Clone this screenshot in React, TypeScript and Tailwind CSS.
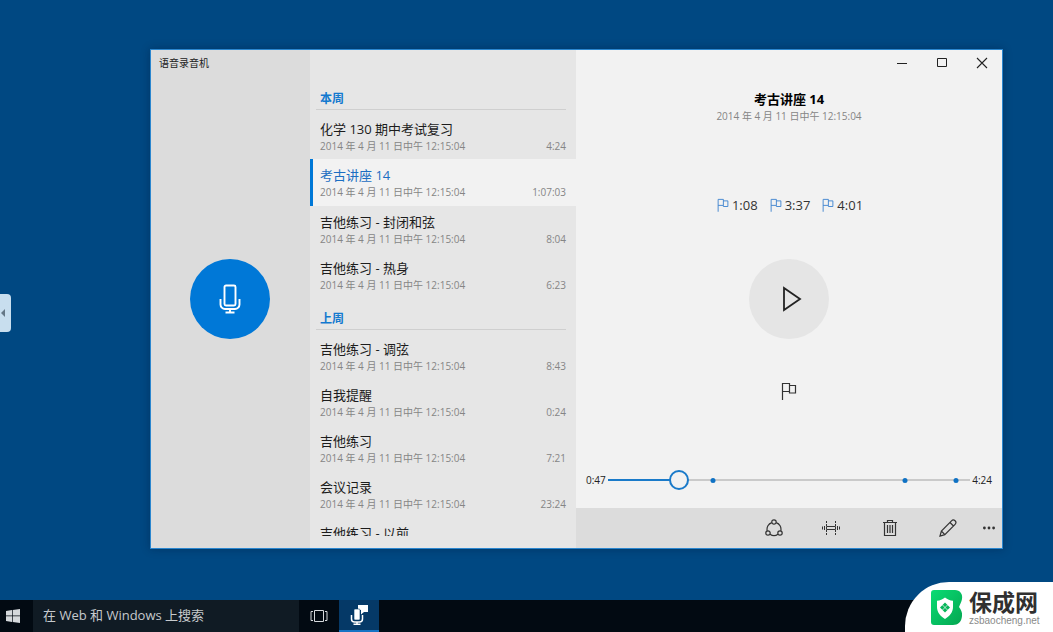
import { useState } from 'react';
import type { ReactNode } from 'react';
import clsx from 'clsx';

interface Recording {
  title: string;
  length?: string;
}

interface RecordingGroup {
  label: string;
  items: Recording[];
}

const RECORDED_AT = '2014 年 4 月 11 日中午 12:15:04';

const GROUPS: RecordingGroup[] = [
  {
    label: '本周',
    items: [
      { title: '化学 130 期中考试复习', length: '4:24' },
      { title: '考古讲座 14', length: '1:07:03' },
      { title: '吉他练习 - 封闭和弦', length: '8:04' },
      { title: '吉他练习 - 热身', length: '6:23' },
    ],
  },
  {
    label: '上周',
    items: [
      { title: '吉他练习 - 调弦', length: '8:43' },
      { title: '自我提醒', length: '0:24' },
      { title: '吉他练习', length: '7:21' },
      { title: '会议记录', length: '23:24' },
      { title: '吉他练习 - 以前' },
    ],
  },
];

const MARKERS = [
  { time: '1:08', position: 29 },
  { time: '3:37', position: 82 },
  { time: '4:01', position: 96 },
];

function FlagIcon({ className }: { className?: string }) {
  return (
    <svg className={className} viewBox="0 0 16 18" fill="none" stroke="currentColor" strokeWidth="1.2" aria-hidden="true">
      <path d="M1.5 18V1.5h7v8h-7M8.5 3.5h6v7.5h-6V9.5" />
    </svg>
  );
}

function MicIcon() {
  return (
    <svg className="h-[30px] w-[22px]" viewBox="0 0 22 30" fill="none" stroke="currentColor" strokeWidth="1.9" aria-hidden="true">
      <rect x="5.5" y="1.5" width="11" height="20" rx="1.5" />
      <path d="M1.5 15v5.5a4.5 4.5 0 0 0 4.5 4.5h10a4.5 4.5 0 0 0 4.5-4.5V15M11 25v3.5M6.5 28.5h9" />
    </svg>
  );
}

function IconButton({ label, className, children }: { label: string; className?: string; children: ReactNode }) {
  return (
    <button type="button" aria-label={label} className={clsx('grid place-items-center', className)}>
      {children}
    </button>
  );
}

function RecordingList({ selected, onSelect }: { selected: string; onSelect: (title: string) => void }) {
  return (
    <div className="flex w-[266px] shrink-0 flex-col bg-[#e6e6e6] pt-9 pb-3">
      <div className="min-h-0 flex-1 overflow-hidden">
        {GROUPS.map(group => (
          <section key={group.label} className="mb-2">
            <h2 className="mr-2.5 ml-1.5 h-6 border-b border-[#cfcfcf] pl-1 text-[12px] leading-[26px] font-bold text-[#1279cf]">{group.label}</h2>
            <ul className="pt-[3px]">
              {group.items.map(item => {
                const active = item.title === selected;
                return (
                  <li key={item.title}>
                    <button
                      type="button"
                      onClick={() => onSelect(item.title)}
                      className={clsx(
                        'flex w-full flex-col border-l-[3px] pt-[7px] pr-2.5 pl-[7px] text-left',
                        active ? 'h-[47px] border-[#0078d7] bg-[#f2f2f2]' : 'h-[46px] border-transparent',
                      )}
                    >
                      <span className={clsx('text-[13px] leading-[18px]', active ? 'text-[#1b6ec2]' : 'text-[#1c1c1c]')}>{item.title}</span>
                      {item.length && (
                        <span className="flex w-full justify-between text-[10px] leading-4 text-[#858585]">
                          <span>{RECORDED_AT}</span>
                          <span>{item.length}</span>
                        </span>
                      )}
                    </button>
                  </li>
                );
              })}
            </ul>
          </section>
        ))}
      </div>
    </div>
  );
}

function SeekBar() {
  const [position, setPosition] = useState(47);
  const played = (position / 264) * 100;

  return (
    <div className="mt-auto mb-[18px] flex items-center gap-0.5 px-2.5 text-[10px] leading-5 text-[#222]">
      <span>0:47</span>
      <div className="relative flex h-5 flex-1 items-center">
        <input
          type="range"
          aria-label="播放位置"
          min={0}
          max={264}
          value={position}
          onChange={e => setPosition(Number(e.target.value))}
          style={{ backgroundImage: `linear-gradient(to right, #1a7ac9 ${played}%, #cacaca ${played}%)` }}
          className="h-0.5 w-full appearance-none [&::-webkit-slider-thumb]:size-5 [&::-webkit-slider-thumb]:appearance-none [&::-webkit-slider-thumb]:rounded-full [&::-webkit-slider-thumb]:border-2 [&::-webkit-slider-thumb]:border-[#1a7ac9] [&::-webkit-slider-thumb]:bg-[#f2f2f2]"
        />
        {MARKERS.map(marker => (
          <span
            key={marker.time}
            className="pointer-events-none absolute size-[5px] -translate-x-1/2 rounded-full bg-[#0f72c4]"
            style={{ left: `${marker.position}%` }}
          />
        ))}
      </div>
      <span>4:24</span>
    </div>
  );
}

function Toolbar() {
  return (
    <div className="flex h-10 shrink-0 items-center justify-end bg-[#dcdcdc] text-[#333]">
      <IconButton label="共享" className="h-10 w-[57px]">
        <svg className="size-[18px]" viewBox="0 0 18 18" fill="none" stroke="currentColor" strokeWidth="1.2" aria-hidden="true">
          <circle cx="9" cy="3" r="2.2" />
          <circle cx="3" cy="14" r="2.2" />
          <circle cx="15" cy="14" r="2.2" />
          <path d="M6.8 3.6A7 7 0 0 0 2.2 11.8M11.2 3.6a7 7 0 0 1 4.6 8.2M5 15.3a7 7 0 0 0 8 0" />
        </svg>
      </IconButton>
      <IconButton label="裁剪" className="h-10 w-[57px]">
        <svg className="h-[14px] w-[18px]" viewBox="0 0 18 14" fill="none" stroke="currentColor" aria-hidden="true">
          <path d="M4.5 5.5h9v3h-9z" />
          <path d="M.5 5.5v3M2.5 5v4M15.500 5v4M17.500 5.500v3" />
          <path d="M4.500 0v14M13.500 0v14" strokeDasharray="2 1" />
        </svg>
      </IconButton>
      <IconButton label="删除" className="h-10 w-[61px]">
        <svg className="h-[18px] w-[14px]" viewBox="0 0 14 18" fill="none" stroke="currentColor" strokeWidth="1.2" aria-hidden="true">
          <path d="M0 3.500h14M4.500 3.500v-2h5v2M1.500 3.500v13h11v-13M4.500 6v8M7 6v8M9.500 6v8" />
        </svg>
      </IconButton>
      <IconButton label="重命名" className="h-10 w-[55px]">
        <svg className="size-[18px]" viewBox="0 0 18 18" fill="none" stroke="currentColor" strokeWidth="1.2" aria-hidden="true">
          <path d="M1 17l1.400-5L12.500 1.800a2.300 2.300 0 0 1 3.600 3.500L5.800 15.600zM2.400 12l3.400 3.600M11 3.500L14.500 7" />
        </svg>
      </IconButton>
      <IconButton label="更多" className="h-10 w-[27px]">
        <svg className="h-1 w-3" viewBox="0 0 12 4" fill="currentColor" aria-hidden="true">
          <circle cx="1.4" cy="2" r="1.4" />
          <circle cx="6" cy="2" r="1.4" />
          <circle cx="10.6" cy="2" r="1.4" />
        </svg>
      </IconButton>
    </div>
  );
}

function Player({ title }: { title: string }) {
  return (
    <div className="flex min-w-0 flex-1 flex-col bg-[#f2f2f2]">
      <div className="flex h-[26px] shrink-0 justify-end text-[#222]">
        <IconButton label="最小化" className="w-10">
          <svg className="size-3" viewBox="0 0 12 12" stroke="currentColor" aria-hidden="true">
            <path d="M1 6.500h10" />
          </svg>
        </IconButton>
        <IconButton label="最大化" className="w-10">
          <svg className="size-3" viewBox="0 0 12 12" fill="none" stroke="currentColor" aria-hidden="true">
            <path d="M1.500 1.500h9v8h-9z" />
          </svg>
        </IconButton>
        <IconButton label="关闭" className="w-10">
          <svg className="size-3" viewBox="0 0 12 12" stroke="currentColor" strokeWidth="1.1" aria-hidden="true">
            <path d="M1 1l10 10M11 1L1 11" />
          </svg>
        </IconButton>
      </div>
      <div className="mt-3.5 flex flex-col items-center">
        <h1 className="text-[13px] leading-[18px] font-bold text-black">{title}</h1>
        <p className="text-[10px] leading-4 text-[#858585]">{RECORDED_AT}</p>
        <ul className="mt-[71px] flex gap-3 pl-0.5 text-[13px] leading-5 text-[#333]">
          {MARKERS.map(marker => (
            <li key={marker.time} className="flex items-center gap-[3px]">
              <FlagIcon className="h-[14px] w-3 text-[#3c82cf]" />
              {marker.time}
            </li>
          ))}
        </ul>
        <IconButton label="播放" className="mt-11 size-20 rounded-full bg-[#e5e5e5] pl-1.5">
          <svg className="h-[26px] w-5" viewBox="0 0 20 26" fill="none" stroke="#222" strokeWidth="1.8" aria-hidden="true">
            <path d="M2 2v22l16-11z" />
          </svg>
        </IconButton>
        <IconButton label="添加标记" className="mt-[43px] text-[#333]">
          <FlagIcon className="h-[18px] w-4" />
        </IconButton>
      </div>
      <SeekBar />
      <Toolbar />
    </div>
  );
}

function Taskbar() {
  return (
    <footer className="flex h-8 shrink-0 bg-[#020a12] text-[#d5d9dc]">
      <IconButton label="开始" className="w-[33px] pr-[7px]">
        <svg className="size-[14px]" viewBox="0 0 14 14" fill="currentColor" aria-hidden="true">
          <path d="M0 2l6-.9v5.500H0zM6.700 1L14 0v6.600H6.700zM0 7.300h6v5.600L0 12zM6.700 7.300H14V14l-7.300-1z" />
        </svg>
      </IconButton>
      <input
        type="text"
        aria-label="搜索"
        placeholder="在 Web 和 Windows 上搜索"
        className="w-[266px] bg-[#101b24] px-2.5 text-[13px] placeholder:text-[#c6cacd] focus:outline-none"
      />
      <IconButton label="任务视图" className="w-10">
        <svg className="h-3 w-[18px]" viewBox="0 0 18 12" fill="none" stroke="currentColor" aria-hidden="true">
          <path d="M4.500.5h9v11h-9zM3 1.500H1v9h2M15 1.500h2v9h-2" />
        </svg>
      </IconButton>
      <IconButton label="语音录音机" className="w-10 border-b-2 border-[#1673c4] bg-[#053967] text-white">
        <svg className="size-5" viewBox="0 0 20 20" fill="none" stroke="currentColor" strokeWidth="1.5" aria-hidden="true">
          <path d="M9 0h10v7h-4l-3 2.500V5H9z" fill="currentColor" stroke="none" />
          <rect x="5" y="4" width="6" height="11" rx="1" fill="currentColor" stroke="#053967" strokeWidth=".6" />
          <path d="M2.500 10v4a3 3 0 0 0 3 3h5a3 3 0 0 0 3-3v-4M8 17v2.300M4.500 19.300h7" />
        </svg>
      </IconButton>
    </footer>
  );
}

function SiteBadge() {
  return (
    <div className="absolute right-0 bottom-0 flex h-[50px] w-[148px] items-center gap-1.5 rounded-tl-[44px] bg-white pt-0.5 pl-[26px]">
      <svg className="h-9 w-8 shrink-0" viewBox="0 0 32 36" aria-hidden="true">
        <defs>
          <linearGradient id="badge-green" x1="0" y1="0" x2="1" y2="1">
            <stop offset="0" stopColor="#08dc74" />
            <stop offset="1" stopColor="#05a650" />
          </linearGradient>
        </defs>
        <path d="M3 0h21c5 0 8 4 7 9-.4 3-2 5-3 8 2 3 3.500 5 3 9-.5 6-4 9-9 9H3a3 3 0 0 1-3-3V3a3 3 0 0 1 3-3z" fill="url(#badge-green)" />
        <path d="M14 7.500c2.500 2 5 3 8 3.200V17c0 5-3 9-8 12-5-3-8-7-8-12v-6.300c3-.2 5.500-1.200 8-3.200z" fill="#fff" />
        <path d="M14 12.500l5 5-5 5-5-5z" fill="#06b559" />
        <path d="M11.500 15l5 5M16.500 15l-5 5" stroke="#fff" strokeWidth=".7" />
      </svg>
      <div>
        <div className="text-[23px] leading-[26px] font-bold text-[#303030]">保成网</div>
        <div className="font-['Liberation_Sans',sans-serif] text-[10px] leading-3 text-[#8a8a8a]">zsbaocheng.net</div>
      </div>
    </div>
  );
}

export default function App() {
  const [selected, setSelected] = useState('考古讲座 14');

  return (
    <div className="relative flex h-screen flex-col overflow-hidden bg-[#004882] font-['Open_Sans','Noto_Sans_CJK_SC',sans-serif]">
      <main className="flex min-h-0 flex-1 pt-[49px] pr-[50px] pb-[51px] pl-[150px]">
        <div className="flex min-w-0 flex-1 border border-[#2a86cf] shadow-[0_0_8px_rgba(0,20,50,0.35)]">
          <div className="flex w-[159px] shrink-0 flex-col bg-[#dcdcdc]">
            <div className="px-2 pt-1 text-[10px] leading-[18px] text-[#222]">语音录音机</div>
            <div className="flex flex-1 items-center justify-center pr-0.5 pb-[22px]">
              <IconButton label="录音" className="size-20 rounded-full bg-[#0078d7] text-white">
                <MicIcon />
              </IconButton>
            </div>
          </div>
          <RecordingList selected={selected} onSelect={setSelected} />
          <Player title={selected} />
        </div>
      </main>
      <Taskbar />
      <button
        type="button"
        aria-label="展开侧栏"
        className="absolute top-[294px] left-0 flex h-[38px] w-[11px] items-center rounded-r bg-[#c8deee] text-[#647786]"
      >
        <svg className="h-2 w-1.5" viewBox="0 0 6 8" fill="currentColor" aria-hidden="true">
          <path d="M5 0v8L1 4z" />
        </svg>
      </button>
      <SiteBadge />
    </div>
  );
}
